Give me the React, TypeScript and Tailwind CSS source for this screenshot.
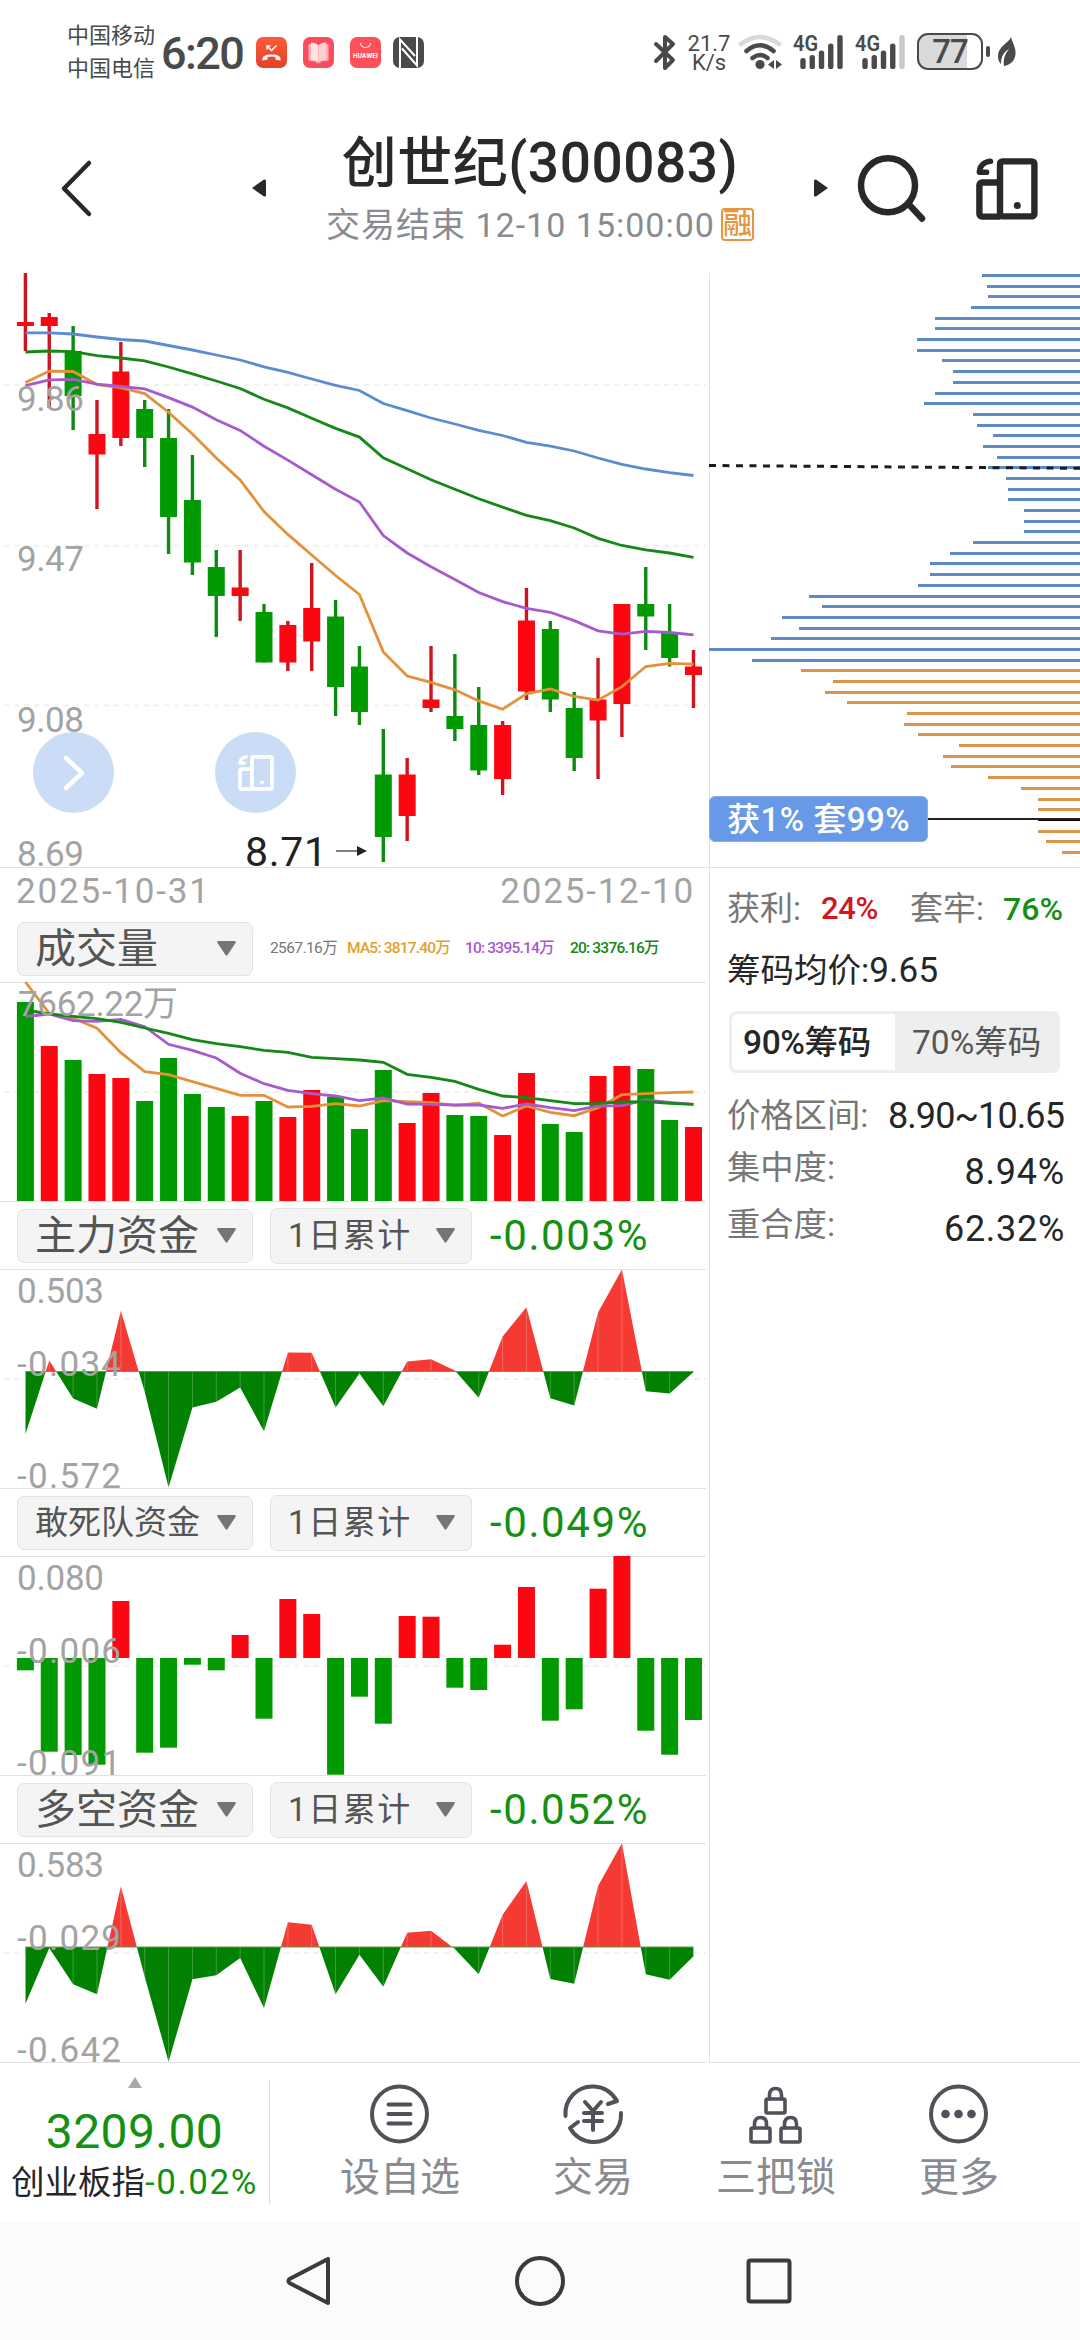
import type { ReactNode } from 'react';

const RED = '#fa0712';
const GREEN = '#029a02';

// x of the i-th trading day, shared by every chart in the left column
const STEP = 23.86;
const X0 = 25.4;
const BAR = 17;
const dayX = (i: number) => X0 + i * STEP;

// [high, low, top, bottom, colour]
type Candle = [number, number, number, number, 'r' | 'g'];

const CANDLES: Candle[] = [
  [273, 351, 322, 326, 'r'],
  [313, 408, 317, 326, 'r'],
  [326, 430, 351, 396, 'g'],
  [400, 509, 434, 454.5, 'r'],
  [342, 446, 371.5, 438, 'r'],
  [400, 467, 409, 438, 'g'],
  [409, 554, 438, 517, 'g'],
  [455, 575, 500, 562.5, 'g'],
  [550, 637, 567, 596, 'g'],
  [550, 621, 587.5, 596, 'r'],
  [604, 662.5, 612, 662.5, 'g'],
  [621, 671, 625, 662.5, 'r'],
  [563, 671, 608, 641.5, 'r'],
  [600, 716, 616.5, 687, 'g'],
  [646, 725, 666.5, 712, 'g'],
  [729, 862, 774.5, 837, 'g'],
  [758, 841, 774.5, 816, 'r'],
  [646, 712, 699.5, 708, 'r'],
  [654, 741, 716, 729, 'g'],
  [687, 775, 725, 770.5, 'g'],
  [721, 795, 725, 779, 'r'],
  [588, 700, 620.5, 691.5, 'r'],
  [621, 712, 629, 699.5, 'g'],
  [692, 771, 708, 758, 'g'],
  [658, 779, 699.5, 720.5, 'r'],
  [604, 737, 604, 704, 'r'],
  [567, 650, 604, 616.5, 'g'],
  [604, 666.5, 633, 658, 'g'],
  [650, 708, 666.5, 675, 'r'],
];

const PRICE_MA = [
  {
    color: '#5b8bd0',
    ys: [332.8, 332.8, 334, 337, 339.5, 341, 345.5, 350, 355, 360, 366.8, 372.3, 379, 385.3, 390.5, 403.5, 410.6, 418, 424, 430.4, 435.5, 442.3, 446.2, 451, 458, 464.4, 469, 472.7, 475.5],
  },
  {
    color: '#158815',
    ys: [352, 351, 351.7, 355.7, 358, 360.8, 367, 373.9, 381, 388.5, 399.2, 407.9, 418.2, 428.4, 437.1, 457.7, 468.8, 479.8, 489.3, 498.8, 507.1, 515.4, 520.6, 528, 538.4, 545.5, 549.8, 553, 557.4],
  },
  {
    color: '#e3913a',
    ys: [382.6, 371.1, 371.5, 384.6, 387.7, 393.6, 412.2, 434, 458.1, 479.9, 511.5, 534.4, 555, 575.5, 594.5, 651.9, 676, 682.3, 689.8, 700.9, 709.2, 693.8, 689, 696.5, 700.1, 686.7, 666.5, 663.3, 664.1],
  },
  {
    color: '#a75acb',
    ys: [385.7, 379.8, 379.4, 384.2, 386.5, 388.9, 397.6, 407.1, 419.7, 430.4, 446.2, 460.1, 474.7, 489.3, 502, 535.6, 553, 566.8, 579.5, 592.5, 601.6, 608.4, 612.3, 620.6, 630.9, 634.1, 631.3, 632.5, 634.9],
  },
];

const VOLUME = [1002, 1046, 1060, 1074, 1078, 1101, 1058, 1094, 1107, 1116, 1101, 1117, 1090, 1097, 1129, 1070, 1123, 1093, 1115, 1116, 1135, 1073, 1124, 1132, 1076, 1066, 1069, 1120, 1127];
const VOLUME_COLORS = 'grgrrggggrgrrgggrrggrrggrrggr';

const VOLUME_MA = [
  {
    color: '#e3913a',
    ys: [982, 1013.3, 1018.3, 1028.3, 1052.7, 1071.7, 1074.7, 1081.7, 1088.3, 1095.3, 1095.3, 1107, 1106.3, 1103.7, 1106, 1100.7, 1101.7, 1102.7, 1105.3, 1103.3, 1116, 1106, 1112.3, 1115.7, 1107.7, 1094.7, 1093.7, 1092.7, 1092],
  },
  {
    color: '#a75acb',
    ys: [1016.7, 1014, 1020.7, 1021.3, 1019.3, 1026.7, 1044.3, 1050.3, 1058, 1073.3, 1083.7, 1090.3, 1093.7, 1096, 1100.7, 1098, 1104, 1104.3, 1105, 1105, 1108.3, 1104, 1107.7, 1110.7, 1106, 1105.7, 1100, 1102.3, 1104.3],
  },
  {
    color: '#158815',
    ys: [1010, 1014, 1016.3, 1018.7, 1022.3, 1028, 1033.3, 1039.7, 1043.7, 1046.7, 1050.3, 1052.3, 1057.3, 1058.7, 1060, 1062.3, 1074.3, 1077.3, 1081.3, 1089.3, 1096, 1097.7, 1100.7, 1103.7, 1103.3, 1102, 1101.7, 1103.3, 1104.3],
  },
];

// offsets from the zero line, positive = inflow
const MAIN_FLOW = [-62.7, 11, -27, -37.3, 60.7, -20.3, -116, -36, -30.3, -16, -59.7, 19, 18.7, -36, -2, -34.7, 10, 12.3, 1, -26.3, 35, 64.3, -26.7, -34, 59, 102, -19.7, -22, -0.5];
const DARE_FLOW = [-12.3, -93.7, -97, -106.7, 57, -94.7, -89.7, -6.7, -12.3, 23, -60.7, 59, 44, -116.7, -38.7, -65.7, 42, 41.3, -29.7, -32, 13.3, 71, -62.7, -51.3, 69.3, 102, -72.7, -96.7, -62];
const BOTH_FLOW = [-57, -1, -37.3, -47.3, 60.7, -29.7, -114.7, -32.3, -28.3, -11, -61, 24.7, 22.3, -47.3, -7.7, -39.7, 14.3, 16.3, -2, -27.3, 32.3, 66, -32, -36.7, 61, 103.7, -27.3, -32.7, -9.3];

const CHIPS = [982, 987, 988, 971, 935, 935, 917, 917, 942, 953, 953, 935, 924, 973, 977, 993, 983, 997, 988, 1006, 1008, 1008, 1024, 1024, 1024, 973, 950, 930, 930, 918, 809, 822, 782, 799, 771, 709, 752, 801, 833, 825, 847, 907, 904, 918, 959, 943, 951, 988, 1021, 1038, 1038, 1038, 1038, 1046, 1062];

const chipColor = (i: number) => (i === 51 ? '#000' : i < 37 ? '#5f8ac6' : '#dd9348');

function AxisLabel({ x = 17, y, width, children }: { x?: number; y: number; width: number; children: ReactNode }) {
  return (
    <text x={x} y={y} textLength={width} fontSize={35} fill="#a3a3a3">
      {children}
    </text>
  );
}

function GridLine({ y }: { y: number }) {
  return <line x1={4} x2={706} y1={y} y2={y} stroke="#f0f0f0" strokeWidth={2} strokeDasharray="5 5" />;
}

function Line({ ys, color }: { ys: number[]; color: string }) {
  return (
    <polyline
      points={ys.map((y, i) => `${dayX(i)},${y}`).join(' ')}
      fill="none"
      stroke={color}
      strokeWidth={2.8}
    />
  );
}

function DeviceIcon({ color, className }: { color: string; className: string }) {
  return (
    <svg viewBox="0 0 62 62" className={className} fill="none" stroke={color} strokeWidth={6.4}>
      <rect x="24" y="3.4" width="34.4" height="55" rx="2.5" />
      <path d="M24 24.5H6a2.6 2.6 0 0 0-2.6 2.6V56a2.6 2.6 0 0 0 2.6 2.6h18" />
      <path d="M14.5 3.2C7 4 3.6 8.5 3.4 14.2h7.2" strokeLinecap="round" strokeLinejoin="round" strokeWidth={5.6} />
      <circle cx="41.3" cy="47.4" r="3.5" fill={color} stroke="none" />
    </svg>
  );
}

function Signal({ weak = false }: { weak?: boolean }) {
  const tops = [23, 20, 15.5, 8.5, 0];
  return (
    <svg width="52" height="36" viewBox="0 0 52 36" className="overflow-visible">
      <text x="0" y="17" fontSize="22" fontWeight="600" fill="#4a4a4a" textLength="25" lengthAdjust="spacingAndGlyphs">
        4G
      </text>
      {tops.map((t, i) => (
        <rect
          key={t}
          x={7.3 + i * 9.25}
          y={t + 1}
          width={5.4}
          height={34 - t}
          rx={2.6}
          fill={weak && i === 4 ? '#c9c9c9' : '#4a4a4a'}
        />
      ))}
    </svg>
  );
}

function StatusBar() {
  return (
    <div className="flex h-[110px] text-[#4a4a4a]">
      <div className="ml-[67px] mt-[19px] w-[94px] text-[22px] leading-[33px]">
        <div>中国移动</div>
        <div>中国电信</div>
      </div>
      <div className="mt-[28px] w-[95px] text-[45px] font-medium leading-[52px] tracking-[-1.6px]">6:20</div>
      <div className="mt-[37px] flex gap-4">
        <svg width="31" height="31" viewBox="0 0 31 31">
          <defs>
            <linearGradient id="call" x1="0" y1="0" x2="0" y2="1">
              <stop offset="0" stopColor="#ff5a38" />
              <stop offset="1" stopColor="#e2402b" />
            </linearGradient>
          </defs>
          <rect width="31" height="31" rx="7" fill="url(#call)" />
          <path d="M6.5 23.5c-1-5 4-6 9-6s10 1 9 6l-5-1v-2.500q-4-1-8 0v2.500z" fill="#fff" />
          <path d="M11 12.5V9h3.5M11 9l4.500 4.500 5-5" fill="none" stroke="#fff" strokeWidth="1.5" />
        </svg>
        <svg width="31" height="31" viewBox="0 0 31 31">
          <rect width="31" height="31" rx="7" fill="#fa4c5c" />
          <path d="M5.5 7.5l2.500-1v17l7.500 3 7.500-3v-17l2.500 1v16l-10 2-10-2z" fill="#fcb0b5" />
          <path d="M8 5.5q5 0 7.500 3v17q-3-2-7.500-2z" fill="#ffe3e4" />
          <path d="M23 5.5q-5 0-7.500 3v17q3-2 7.500-2z" fill="#ffd0d2" />
        </svg>
        <svg width="31" height="31" viewBox="0 0 31 31">
          <rect width="31" height="31" rx="7" fill="#fd5058" />
          <path d="M10.5 6c.5 6 9.500 6 10 0" fill="none" stroke="#ffe6e6" strokeWidth="1.2" />
          <text x="3" y="20.5" fontSize="6.5" fontWeight="700" textLength="25" fill="#fff">HUAWEI</text>
        </svg>
        <svg width="31" height="31" viewBox="0 0 31 31" className="-ml-1">
          <rect width="31" height="31" rx="7" fill="#4a4a4a" />
          <path d="M7 31V2.500L22 19M24 0v28.500L9 11.500" fill="none" stroke="#fff" strokeWidth="2" />
        </svg>
      </div>

      <div className="ml-[229px] mt-[34px] flex">
        <svg width="24" height="37" viewBox="0 0 24 37" fill="none" stroke="#4a4a4a" strokeWidth="4" strokeLinecap="round" strokeLinejoin="round">
          <path d="M3 10l17 16-8 8V3l8 7L3 27" />
        </svg>
        <div className="ml-[9px] w-[46px] text-center text-[22px] leading-[19px]">
          <div>21.7</div>
          <div>K/s</div>
        </div>
        <svg width="44" height="36" viewBox="0 0 44 36" className="ml-[6px]" fill="none" strokeLinecap="round" strokeWidth="4.5">
          <path d="M3 10Q22-4 41 10" stroke="#d9d9d9" />
          <path d="M8.5 17Q22 5.500 35.500 17" stroke="#4a4a4a" />
          <path d="M14.5 24Q22 18 29.500 24" stroke="#4a4a4a" />
          <circle cx="22" cy="30.5" r="4.6" fill="#4a4a4a" />
          <path d="M36 26v9l-6-4.500zM38 26v9l6-4.500z" fill="#4a4a4a" />
        </svg>
        <div className="ml-[11px] flex gap-[10px]">
          <Signal />
          <Signal weak />
        </div>
        <div className="-mt-px ml-[10px] flex h-[37px] w-[66px] items-center justify-center rounded-[11px] border-[2.5px] border-[#4a4a4a] bg-linear-to-r from-[#dadada] from-78% to-white to-78% text-[33px] font-medium leading-none tracking-[-1px]">
          77
        </div>
        <div className="ml-[3px] mt-[12px] h-[11px] w-[4px] rounded-sm bg-[#4a4a4a]" />
        <svg width="19" height="30" viewBox="0 0 19 30" className="ml-[8px] mt-[3px]">
          <path d="M13 0c-2 6-13 9-13 19 0 4 1 6 3 8 0-8 3-12 8-15-4 5-6 10-5 17 7-1 11-6 11.500-12C18 11 15 7 13 0z" fill="#4a4a4a" />
        </svg>
      </div>
    </div>
  );
}

function Header() {
  return (
    <div className="flex h-[163px] text-[#28292b]">
      <svg width="40" height="64" viewBox="0 0 40 64" className="ml-[56px] mt-[46px]" fill="none" stroke="#28292b" strokeWidth="4.5" strokeLinecap="round" strokeLinejoin="round">
        <path d="M33 7L8 32.500 33 58" />
      </svg>
      <svg width="14" height="18" viewBox="0 0 14 18" className="ml-[156px] mt-[69px]" fill="#28292b">
        <path d="M0 9L12 .5Q14 0 14 2v14q0 2-2 1.500z" />
      </svg>
      <div className="ml-[48px] w-[452px] whitespace-nowrap">
        <div className="mt-[19px] text-center text-[55px] font-medium leading-[68px] tracking-[0.5px]">创世纪(300083)</div>
        <div className="mt-[11px] flex justify-center text-[#8a8b90]">
          <span className="text-[34px] leading-[34px] tracking-[1px]">交易结束 12-10 15:00:00</span>
          <span className="ml-[6px] flex h-[33px] w-[33px] items-center justify-center rounded border-2 border-[#e8953f] text-[29px] font-medium leading-none text-[#e8953f]">
            融
          </span>
        </div>
      </div>
      <svg width="14" height="18" viewBox="0 0 14 18" className="ml-[48px] mt-[69px]" fill="#28292b">
        <path d="M14 9L2 .5Q0 0 0 2v14q0 2 2 1.500z" />
      </svg>
      <svg width="70" height="70" viewBox="0 0 70 70" className="ml-[29px] mt-[44px]" fill="none" stroke="#28292b" strokeWidth="6.5" strokeLinecap="round">
        <circle cx="31" cy="31.3" r="27" />
        <path d="M52 50.5L65 64.5" />
      </svg>
      <DeviceIcon color="#28292b" className="ml-[49px] mt-[48px] h-[62px] w-[62px]" />
    </div>
  );
}

function PriceChart() {
  return (
    <div className="relative h-[595px] border-b border-[#e2e2e2]">
      <svg width="709" height="594" viewBox="0 273 709 594" className="block overflow-visible">
        {[385, 545.7, 705.6].map((y) => (
          <GridLine key={y} y={y} />
        ))}
        {CANDLES.map(([high, low, top, bottom, c], i) => (
          <g key={i}>
            <rect x={dayX(i) - 1.7} y={high} width={3.4} height={low - high} fill={c === 'r' ? '#cf1420' : '#0d8a12'} />
            <rect x={dayX(i) - BAR / 2} y={top} width={BAR} height={bottom - top} fill={c === 'r' ? RED : GREEN} />
          </g>
        ))}
        {PRICE_MA.map((ma) => (
          <Line key={ma.color} {...ma} />
        ))}
        <AxisLabel y={411} width={67}>9.86</AxisLabel>
        <AxisLabel y={571} width={67}>9.47</AxisLabel>
        <AxisLabel y={732} width={67}>9.08</AxisLabel>
        <AxisLabel y={866} width={67}>8.69</AxisLabel>
        <text x="245" y="866" fontSize="41" textLength="82" fill="#222">8.71</text>
        <path d="M336 851h23" stroke="#555" strokeWidth="1.5" />
        <path d="M357 846l10 5-10 5z" fill="#222" />
      </svg>
      {/* плавающие кнопки */}
      <div className="absolute left-[33px] top-[459px] flex h-[81px] w-[81px] items-center justify-center rounded-full bg-[#cbdcf6]">
        <svg width="24" height="36" viewBox="0 0 24 36" fill="none" stroke="#fff" strokeWidth="4.5" strokeLinecap="round" strokeLinejoin="round">
          <path d="M4 3l16 15L4 33" />
        </svg>
      </div>
      <div className="absolute left-[215px] top-[459px] flex h-[81px] w-[81px] items-center justify-center rounded-full bg-[#cbdcf6]">
        <DeviceIcon color="#fff" className="h-[36px] w-[36px]" />
      </div>
    </div>
  );
}

function ChipChart() {
  return (
    <div className="relative h-[595px] border-b border-[#e2e2e2]">
      <svg width="371" height="594" viewBox="709 273 371 594" className="-ml-px block">
        {CHIPS.map((x, i) => (
          <rect key={i} x={x} y={Math.round(274 + i * 10.684)} width={1080 - x} height={i === 51 ? 2 : 3} fill={chipColor(i)} />
        ))}
        <line x1="709" x2="1080" y1="465.5" y2="468.3" stroke="#1c1c1c" strokeWidth="3" strokeDasharray="7 6.5" />
        <rect x="709" y="818" width="371" height="2" fill="#222" />
      </svg>
      <div className="absolute -left-px top-[523px] flex h-[46px] w-[219px] items-center whitespace-nowrap rounded-md border border-[#86aeea] bg-[#6799e6] pl-[17px] text-[33px] font-medium leading-none tracking-[0.5px] text-white">
        获1% 套99%
      </div>
    </div>
  );
}

function Caret({ className }: { className: string }) {
  return (
    <svg width="19" height="15" viewBox="0 0 19 15" className={className} fill="#757575">
      <path d="M1.500 0h16q2 .3 1 2l-8 12q-1 1.300-2 0L.5 2q-1-1.700 1-2z" />
    </svg>
  );
}

function Picker({ label, size }: { label: string; size: string }) {
  return (
    <div className="flex h-[54px] w-[236px] items-center justify-between rounded-[7px] border border-[#e3e3e3] bg-[#f4f4f4] pl-[17px] pr-[16px] text-[#555]">
      <span className={`whitespace-nowrap leading-[50px] ${size}`}>{label}</span>
      <Caret className="shrink-0" />
    </div>
  );
}

function FlowHeader({ label, size, value }: { label: string; size: string; value: string }) {
  return (
    <div className="flex h-[68px] w-[706px] items-center border-b border-[#e2e2e2] pl-[17px]">
      <Picker label={label} size={size} />
      <div className="ml-[17px] flex h-[56px] w-[202px] items-center justify-between rounded-[7px] border border-[#e3e3e3] bg-[#f4f4f4] pl-[17px] pr-[16px] text-[33px] text-[#555]">
        <span className="leading-[50px] tracking-[1.6px]">1日累计</span>
        <Caret className="" />
      </div>
      <span className="ml-[18px] text-[42px] leading-[50px] tracking-[1.6px] text-[#149014]">{value}</span>
    </div>
  );
}

type FlowProps = { id: string; top: number; zero: number; mid: number; values: number[]; labels: [string, string, string] };

function ChartBox({ top, children }: { top: number; children: ReactNode }) {
  return (
    <div className="h-[219px] w-[706px] border-b border-[#e2e2e2]">
      <svg width="706" height="218" viewBox={`0 ${top + 1} 706 218`} className="block overflow-visible">
        {children}
      </svg>
    </div>
  );
}

function FlowLabels({ top, labels }: { top: number; labels: [string, string, string] }) {
  return (
    <>
      <AxisLabel y={top + 34} width={87}>{labels[0]}</AxisLabel>
      <AxisLabel y={top + 107} width={104}>{labels[1]}</AxisLabel>
      <AxisLabel y={top + 219} width={104}>{labels[2]}</AxisLabel>
    </>
  );
}

function AreaFlow({ id, top, zero, mid, values, labels }: FlowProps) {
  const last = values.length - 1;
  const points = `${dayX(0)},${zero} ${values.map((v, i) => `${dayX(i)},${zero - v}`).join(' ')} ${dayX(last)},${zero}`;
  return (
    <ChartBox top={top}>
      <clipPath id={`${id}-up`}>
        <rect x="0" y={top} width="706" height={zero - top} />
      </clipPath>
      <clipPath id={`${id}-down`}>
        <rect x="0" y={zero} width="706" height={top + 219 - zero} />
      </clipPath>
      <GridLine y={mid} />
      <polygon points={points} fill="#f43a33" clipPath={`url(#${id}-up)`} />
      <polygon points={points} fill="#028002" clipPath={`url(#${id}-down)`} />
      {values.map((v, i) => (
        <line key={i} x1={dayX(i)} x2={dayX(i)} y1={zero} y2={zero - v} stroke="#fff" strokeOpacity={0.3} strokeWidth={0.8} />
      ))}
      <line x1={dayX(0)} x2={dayX(last)} y1={zero} y2={zero} stroke="#5a9a50" strokeWidth={1} />
      <FlowLabels top={top} labels={labels} />
    </ChartBox>
  );
}

function BarFlow({ top, zero, mid, values, labels }: FlowProps) {
  return (
    <ChartBox top={top}>
      <GridLine y={mid} />
      {values.map((v, i) => (
        <rect
          key={i}
          x={dayX(i) - BAR / 2}
          y={v > 0 ? zero - v : zero}
          width={BAR}
          height={Math.abs(v)}
          fill={v > 0 ? RED : GREEN}
        />
      ))}
      <FlowLabels top={top} labels={labels} />
    </ChartBox>
  );
}

function VolumeChart() {
  return (
    <ChartBox top={982}>
      <GridLine y={1092} />
      {VOLUME.map((y, i) => (
        <rect key={i} x={dayX(i) - BAR / 2} y={y} width={BAR} height={1201 - y} fill={VOLUME_COLORS[i] === 'r' ? RED : GREEN} />
      ))}
      {VOLUME_MA.map((ma) => (
        <Line key={ma.color} {...ma} />
      ))}
      <AxisLabel x={18} y={1016} width={160}>7662.22万</AxisLabel>
    </ChartBox>
  );
}

function Charts() {
  return (
    <div className="w-[709px]">
      <PriceChart />
      <div className="flex h-[46px] w-[706px] justify-between pl-[16px] pr-[11px] pt-px text-[35px] leading-[46px] tracking-[1.8px] text-[#a3a3a3]">
        <span>2025-10-31</span>
        <span>2025-12-10</span>
      </div>
      <div className="flex h-[69px] w-[706px] items-center border-b border-[#e2e2e2] pl-[17px] pt-px">
        <Picker label="成交量" size="text-[41px]" />
        <div className="ml-[17px] flex whitespace-nowrap text-[15.5px] tracking-[-0.8px]">
          <span className="w-[77px] tracking-[-0.6px] text-[#777]">2567.16万</span>
          <span className="w-[118px] font-medium text-[#e3a02c]">MA5: 3817.40万</span>
          <span className="w-[105px] font-medium text-[#a75acb]">10: 3395.14万</span>
          <span className="font-medium text-[#158815]">20: 3376.16万</span>
        </div>
      </div>
      <VolumeChart />
      <FlowHeader label="主力资金" size="text-[41px]" value="-0.003%" />
      <AreaFlow id="main" top={1269} zero={1371.5} mid={1379} values={MAIN_FLOW} labels={['0.503', '-0.034', '-0.572']} />
      <FlowHeader label="敢死队资金" size="text-[33px]" value="-0.049%" />
      <BarFlow id="dare" top={1556} zero={1658} mid={1665.7} values={DARE_FLOW} labels={['0.080', '-0.006', '-0.091']} />
      <FlowHeader label="多空资金" size="text-[41px]" value="-0.052%" />
      <AreaFlow id="both" top={1843} zero={1947} mid={1953} values={BOTH_FLOW} labels={['0.583', '-0.029', '-0.642']} />
    </div>
  );
}

function ChipPanel() {
  return (
    <div className="w-[371px] border-b border-l border-[#e2e2e2]">
      <ChipChart />
      <div className="whitespace-nowrap pl-[17px] pr-[17px] text-[#777]">
        <div className="mt-[17px] flex h-[48px] items-center text-[33px]">
          <span>获利:</span>
          <span className="ml-[20px] text-[31px] font-medium tracking-[-0.4px] text-[#d0171f]">24%</span>
          <span className="ml-auto">套牢:</span>
          <span className="ml-[19px] text-[32px] font-medium text-[#149014]">76%</span>
        </div>
        <div className="mt-[13px] h-[50px] text-[33.5px] leading-[50px] text-[#262626]">
          筹码均价:<span className="text-[35px] tracking-[0.3px]">9.65</span>
        </div>
        <div className="ml-[2px] mt-[15px] flex h-[62px] w-[331px] rounded-[7px] bg-[#eee] p-[3px] text-[33.5px] leading-[57px]">
          <div className="w-[163px] rounded-l-[6px] bg-white pl-[11px] font-medium tracking-[-0.4px] text-[#262626]">90%筹码</div>
          <div className="pl-[17px] text-[#555]">70%筹码</div>
        </div>
        <div className="-mr-px mt-[18px] flex h-[50px] items-center justify-between text-[33.3px]">
          <span>价格区间:</span>
          <span className="text-[36px] tracking-[-0.9px] text-[#262626]">8.90~10.65</span>
        </div>
        <div className="-mr-[2px] mt-[4px] flex h-[50px] items-center justify-between text-[33.3px]">
          <span className="-mt-1">集中度:</span>
          <span className="pt-1 text-[36px] tracking-[0.8px] text-[#262626]">8.94%</span>
        </div>
        <div className="-mr-[2px] mt-[7px] flex h-[50px] items-center justify-between text-[33.3px]">
          <span className="-mt-1">重合度:</span>
          <span className="pt-1 text-[36px] tracking-[0.7px] text-[#262626]">62.32%</span>
        </div>
      </div>
    </div>
  );
}

function Tab({ label, className, children }: { label: string; className: string; children: ReactNode }) {
  return (
    <div className={`flex flex-col items-center ${className}`}>
      <svg width="64" height="64" viewBox="0 0 64 64" className="mt-[19px]" fill="none" stroke="#505159" strokeWidth="4" strokeLinecap="round" strokeLinejoin="round">
        {children}
      </svg>
      <span className="mt-[8px] whitespace-nowrap text-[40px] leading-[48px] text-[#8a8b90]">{label}</span>
    </div>
  );
}

function Lock({ x, y }: { x: number; y: number }) {
  return (
    <g transform={`translate(${x} ${y})`} strokeWidth="3.6">
      <rect x="2" y="12" width="19" height="14" rx="1.5" />
      <path d="M5.5 12V8q0-6.500 6-6.500t6 6.500v4" />
    </g>
  );
}

function BottomBar() {
  return (
    <div className="flex h-[159px]">
      <div className="flex w-[269px] flex-col items-center whitespace-nowrap text-[#149014]">
        <svg width="14" height="11" viewBox="0 0 14 11" className="mt-[14px]" fill="#a8a8a8">
          <path d="M7 0l7 11H0z" />
        </svg>
        <div className="mt-[14px] text-[48px] leading-[60px] tracking-[0.4px]">3209.00</div>
        <div className="text-[33.5px] leading-[42px]">
          <span className="text-[#262626]">创业板指</span>
          <span className="text-[35px] tracking-[1.6px]">-0.02%</span>
        </div>
      </div>
      <div className="mt-[17px] h-[125px] w-px bg-[#e0e0e0]" />
      <Tab label="设自选" className="ml-[60px] w-[140px]">
        <circle cx="31.5" cy="32" r="27.5" />
        <path d="M20.5 22.5h22M20.500 32h22M20.500 41.500h22" />
      </Tab>
      <Tab label="交易" className="ml-[53px] w-[140px]">
        <path d="M4.5 34C3 17 17 3.500 33 4.500c11 .5 18 6 23 14.500l-9 3" />
        <path d="M60 31c1 17-13 30-29 29-10-1-17-5-22-14l8-6" />
        <path d="M24 20l8 9 8-9M32 29v19M23 31h18M23 39h18" />
      </Tab>
      <Tab label="三把锁" className="ml-[43px] w-[140px]">
        <Lock x={20} y={5} />
        <Lock x={5} y={34} />
        <Lock x={35} y={34} />
      </Tab>
      <Tab label="更多" className="ml-[43px] w-[140px]">
        <circle cx="31.5" cy="32" r="27.5" />
        <g fill="#505159" stroke="none">
          <circle cx="18.5" cy="32" r="4.3" />
          <circle cx="31.5" cy="32" r="4.3" />
          <circle cx="44.5" cy="32" r="4.3" />
        </g>
      </Tab>
    </div>
  );
}

function NavBar() {
  return (
    <div className="flex h-[118px] bg-[#fbfbfb] pt-[31px]">
      <svg width="56" height="56" viewBox="0 0 56 56" className="ml-[280px]" fill="none" stroke="#3b3b3b" strokeWidth="4" strokeLinejoin="round">
        <path d="M48 6v44L9.500 30q-2-2 0-4z" />
      </svg>
      <svg width="56" height="56" viewBox="0 0 56 56" className="ml-[176px]" fill="none" stroke="#3b3b3b" strokeWidth="4">
        <circle cx="28" cy="28" r="23" />
      </svg>
      <svg width="56" height="56" viewBox="0 0 56 56" className="ml-[173px]" fill="none" stroke="#3b3b3b" strokeWidth="4">
        <rect x="7.5" y="7.5" width="41" height="41" rx="2" />
      </svg>
    </div>
  );
}

export default function App() {
  return (
    <div className="h-[2340px] w-[1080px] overflow-hidden bg-white font-['Roboto','Noto_Sans_CJK_SC',sans-serif]">
      <StatusBar />
      <Header />
      <div className="flex h-[1790px]">
        <Charts />
        <ChipPanel />
      </div>
      <BottomBar />
      <NavBar />
    </div>
  );
}
